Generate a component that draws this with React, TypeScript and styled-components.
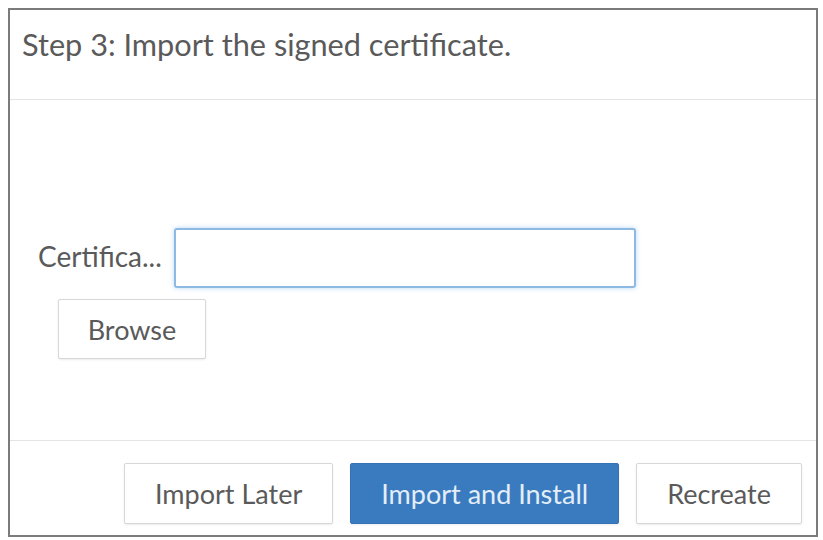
import React from 'react';
import styled, { createGlobalStyle } from 'styled-components';

const GlobalStyle = createGlobalStyle`
  html, body {
    margin: 0;
    padding: 0;
    background: #ffffff;
  }
  body {
    font-family: Lato, 'Open Sans', 'Liberation Sans', sans-serif;
    color: #585858;
  }
`;

const Dialog = styled.div`
  box-sizing: border-box;
  width: 810px;
  height: 529px;
  margin: 8px;
  border: 2px solid #7b7b7b;
  display: flex;
  flex-direction: column;
  background: #ffffff;
`;

const Header = styled.div`
  height: 90px;
  box-sizing: border-box;
  padding: 17px 12px 0;
  border-bottom: 1px solid #e4e4e4;
  font-size: 30.7px;
  line-height: 36px;
  color: #5a5a5a;
`;

const Body = styled.div`
  flex: 1;
  padding: 128px 0 0 28px;
  display: flex;
  flex-direction: column;
  align-items: flex-start;
`;

const FieldRow = styled.div`
  display: flex;
  align-items: center;
  gap: 12px;
`;

const Label = styled.label`
  font-size: 28px;
  line-height: 34px;
  padding-bottom: 4px;
  color: #5a5a5a;
`;

const TextInput = styled.input`
  box-sizing: border-box;
  width: 462px;
  height: 60px;
  border: 2px solid #8db9e2;
  border-radius: 3px;
  box-shadow: 0 0 5px rgba(102, 170, 230, 0.45);
  outline: none;
  background: #ffffff;
`;

const Button = styled.button<{ $primary?: boolean }>`
  box-sizing: border-box;
  height: 61px;
  padding: 0 30px;
  font-family: inherit;
  font-size: 27px;
  border-radius: 2px;
  cursor: pointer;
  border: 1px solid ${p => (p.$primary ? '#3473b5' : '#d7d7d7')};
  background: ${p => (p.$primary ? '#3a7bbf' : '#ffffff')};
  color: ${p => (p.$primary ? '#e4eef8' : '#5a5a5a')};
  box-shadow: 0 1px 2px rgba(0, 0, 0, 0.08);
`;

const BrowseButton = styled(Button)`
  width: 148px;
  height: 60px;
  margin: 11px 0 0 20px;
  padding: 0;
`;

const Footer = styled.div`
  height: 95px;
  box-sizing: border-box;
  border-top: 1px solid #e4e4e4;
  padding: 22px 14px 0 0;
  display: flex;
  justify-content: flex-end;
  align-items: flex-start;
  gap: 17px;
`;

export default function App() {
  return (
    <>
      <GlobalStyle />
      <Dialog>
        <Header>Step 3: Import the signed certificate.</Header>
        <Body>
          <FieldRow>
            <Label>Certifica...</Label>
            <TextInput type="text" />
          </FieldRow>
          <BrowseButton>Browse</BrowseButton>
        </Body>
        <Footer>
          <Button>Import Later</Button>
          <Button $primary>Import and Install</Button>
          <Button>Recreate</Button>
        </Footer>
      </Dialog>
    </>
  );
}
